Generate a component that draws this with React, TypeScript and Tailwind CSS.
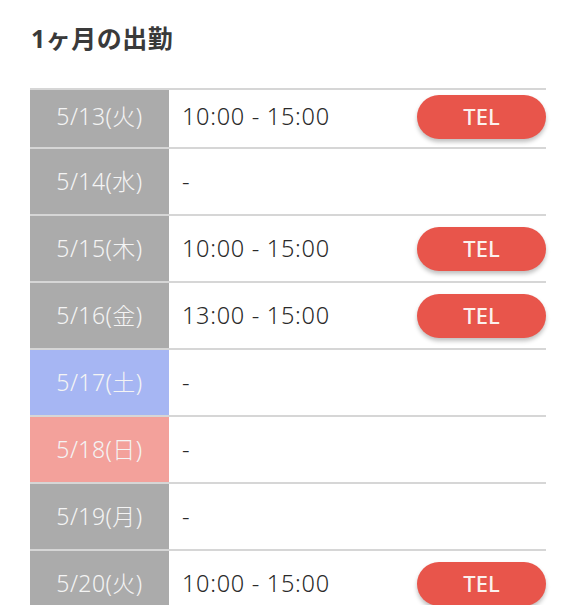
import * as React from 'react';

type Shift = {
  date: string;
  time: string;
  tel: boolean;
  tone: 'gray' | 'blue' | 'pink';
};

const shifts: Shift[] = [
  { date: '5/13(火)', time: '10:00 - 15:00', tel: true, tone: 'gray' },
  { date: '5/14(水)', time: '-', tel: false, tone: 'gray' },
  { date: '5/15(木)', time: '10:00 - 15:00', tel: true, tone: 'gray' },
  { date: '5/16(金)', time: '13:00 - 15:00', tel: true, tone: 'gray' },
  { date: '5/17(土)', time: '-', tel: false, tone: 'blue' },
  { date: '5/18(日)', time: '-', tel: false, tone: 'pink' },
  { date: '5/19(月)', time: '-', tel: false, tone: 'gray' },
  { date: '5/20(火)', time: '10:00 - 15:00', tel: true, tone: 'gray' },
];

const toneClass = {
  gray: 'bg-[#ababab]',
  blue: 'bg-[#a6b6f3]',
  pink: 'bg-[#f3a19b]',
};

const App = () => {
  return (
    <div
      className="min-h-screen bg-white overflow-hidden"
      style={{ fontFamily: '"Noto Sans", "Noto Sans CJK JP", sans-serif' }}
    >
      <h2 className="pl-[31px] pt-[21px] text-[25px] leading-[34px] font-bold text-[#3a3a3a] tracking-[0.02em]">
        1ヶ月の出勤
      </h2>

      {/* Schedule table */}
      <div className="mt-[33px] ml-[30px] w-[516px] border-t-2 border-[#d6d6d6]">
        {shifts.map((s, i) => (
          <div
            key={s.date}
            className={`flex border-b-2 border-[#d6d6d6] ${i === 0 ? 'h-[59px]' : 'h-[67px]'}`}
          >
            <div
              className={`w-[139px] shrink-0 flex items-center justify-center text-[23px] font-light text-[#f4f4f4] tracking-[0.02em] ${toneClass[s.tone]} ${i === 0 ? 'pb-1' : ''}`}
            >
              {s.date}
            </div>
            <div className={`flex-1 flex items-center justify-between pl-[13px] ${i === 0 ? 'pb-1' : ''}`}>
              <span className="text-[23.5px] font-light text-[#2a2a2a] tracking-[0.03em]">{s.time}</span>
              {s.tel && (
                <button className="w-[129px] h-[44px] rounded-full bg-[#e8554b] text-[#fbf1ee] text-[22px] font-medium shadow-[0_3px_4px_rgba(0,0,0,0.25)]">
                  TEL
                </button>
              )}
            </div>
          </div>
        ))}
      </div>
    </div>
  );
};

export default App;
